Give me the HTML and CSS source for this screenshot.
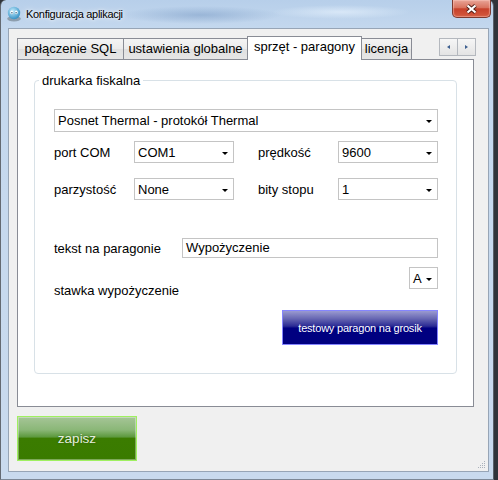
FILE: index.html
```html
<!DOCTYPE html>
<html>
<head>
    <title>Konfiguracja aplikacji</title>
    <link rel="stylesheet" href="styles.css">
</head>
<body>
    <div class="window">
        <div class="titlebar">
            <svg class="app-icon" width="16" height="16" viewBox="0 0 16 16">
                <defs>
                    <radialGradient id="face" cx="0.4" cy="0.35" r="0.7">
                        <stop offset="0" stop-color="#c4ecfc"/>
                        <stop offset="1" stop-color="#2c8cc2"/>
                    </radialGradient>
                </defs>
                <ellipse cx="8" cy="12.8" rx="6.8" ry="2.8" fill="#8d9eae"/>
                <circle cx="8" cy="7" r="6.2" fill="url(#face)"/>
                <ellipse cx="5.7" cy="6.4" rx="1.4" ry="1.8" fill="#fff"/>
                <ellipse cx="10.3" cy="6.4" rx="1.4" ry="1.8" fill="#fff"/>
                <circle cx="5.9" cy="6.8" r="0.7" fill="#1d4f70"/>
                <circle cx="10.1" cy="6.8" r="0.7" fill="#1d4f70"/>
            </svg>
            <span class="title">Konfiguracja aplikacji</span>
            <div class="close-btn">
                <svg width="13" height="10" viewBox="0 0 13 10">
                    <path d="M2.5 1.5 L10.5 8.5 M10.5 1.5 L2.5 8.5" stroke="#4f1d15" stroke-width="4"/>
                    <path d="M2.5 1.5 L10.5 8.5 M10.5 1.5 L2.5 8.5" stroke="#fff" stroke-width="2.2"/>
                </svg>
            </div>
        </div>

        <div class="client">
            <div class="tab-header">
                <div class="tab tab-sql">połączenie SQL</div>
                <div class="tab tab-global">ustawienia globalne</div>
                <div class="tab tab-hw active">sprzęt - paragony</div>
                <div class="tab tab-lic">licencja</div>
                <div class="tab-scroll">
                    <div class="scroll-btn"><i class="tri-left"></i></div>
                    <div class="scroll-btn"><i class="tri-right"></i></div>
                </div>
            </div>

            <div class="tab-page">
                <fieldset class="group">
                    <legend>drukarka fiskalna</legend>

                    <div class="combo combo-printer">
                        <span>Posnet Thermal - protokół Thermal</span>
                        <i class="arrow"></i>
                    </div>

                    <div class="port-grid">
                        <label>port COM</label>
                        <div class="combo"><span>COM1</span><i class="arrow"></i></div>
                        <label class="col-second">prędkość</label>
                        <div class="combo"><span>9600</span><i class="arrow"></i></div>

                        <label>parzystość</label>
                        <div class="combo"><span>None</span><i class="arrow"></i></div>
                        <label class="col-second">bity stopu</label>
                        <div class="combo"><span>1</span><i class="arrow"></i></div>
                    </div>

                    <div class="text-row">
                        <label>tekst na paragonie</label>
                        <div class="textbox">Wypożyczenie</div>
                    </div>

                    <div class="rate-row">
                        <label>stawka wypożyczenie</label>
                        <div class="combo combo-rate"><span>A</span><i class="arrow"></i></div>
                    </div>

                    <div class="actions">
                        <button class="print-btn">testowy paragon na grosik</button>
                    </div>
                </fieldset>
            </div>

            <button class="save-btn">zapisz</button>

            <svg class="grip" width="8" height="8" viewBox="0 0 8 8">
                <g fill="#a9b1bb">
                    <rect x="6" y="0" width="1" height="1"/>
                    <rect x="4" y="2" width="1" height="1"/>
                    <rect x="6" y="2" width="1" height="1"/>
                    <rect x="2" y="4" width="1" height="1"/>
                    <rect x="4" y="4" width="1" height="1"/>
                    <rect x="6" y="4" width="1" height="1"/>
                    <rect x="0" y="6" width="1" height="1"/>
                    <rect x="2" y="6" width="1" height="1"/>
                    <rect x="4" y="6" width="1" height="1"/>
                    <rect x="6" y="6" width="1" height="1"/>
                </g>
            </svg>
        </div>
    </div>
</body>
</html>
```

FILE: styles.css
```css
* {
    box-sizing: border-box;
}

body {
    margin: 0;
    background: #30343a;
    font-family: 'Liberation Sans', Arial, sans-serif;
    font-size: 13px;
    color: #000;
}

/* window frame (aero glass) */
.window {
    width: 494px;
    height: 480px;
    display: flex;
    flex-direction: column;
    padding: 0 4px 7px 7px;
    border-left: 1px solid #646a72;
    border-right: 1px solid #596069;
    border-bottom: 1px solid #7d8896;
    border-radius: 6px 6px 0 0;
    background:
        radial-gradient(ellipse 80px 9px at 200px 15px, rgba(110, 145, 190, 0.45), transparent),
        radial-gradient(ellipse 70px 7px at 340px 12px, rgba(235, 245, 255, 0.6), transparent),
        linear-gradient(to bottom, #b7cfea 0px, #c4d8ee 29px, #c9daee 100%);
}

.titlebar {
    height: 29px;
    display: flex;
    align-items: flex-start;
    margin-left: -2px;
    margin-right: -2px;
}

.app-icon {
    margin-top: 6px;
    flex: none;
}

.title {
    margin-top: 7px;
    margin-left: 4px;
    font-size: 11px;
    line-height: 14px;
    letter-spacing: -0.3px;
    color: #000;
    text-shadow: 0 0 6px rgba(255, 255, 255, 0.9), 0 0 3px rgba(255, 255, 255, 0.9);
}

.close-btn {
    margin-left: auto;
    width: 39px;
    height: 18px;
    display: flex;
    align-items: center;
    justify-content: center;
    border: 1px solid #7d3a30;
    border-top: none;
    border-radius: 0 0 5px 5px;
    background: linear-gradient(to bottom, #e8a497 0%, #d9735f 45%, #c7412b 52%, #d45a3f 100%);
    box-shadow: inset 0 0 1px 1px rgba(255, 210, 200, 0.45);
}

/* client area */
.client {
    flex: 1;
    position: relative;
    display: flex;
    flex-direction: column;
    background: #f0f0f0;
    border: 1px solid #97a5b6;
    padding: 7px 14px 10px 8px;
}

.grip {
    position: absolute;
    right: 2px;
    bottom: 2px;
}

/* tabs */
.tab-header {
    display: flex;
    align-items: flex-end;
    height: 23px;
    margin-right: -2px;
}

.tab {
    height: 21px;
    margin-right: -1px;
    border: 1px solid #898c95;
    border-bottom: none;
    background: linear-gradient(to bottom, #f4f4f4 0%, #ebebeb 50%, #e0e0e0 51%, #e6e6e6 100%);
    text-align: center;
    line-height: 20px;
    white-space: nowrap;
}

.tab-sql { width: 107px; }
.tab-global { width: 125px; }
.tab-hw { width: 115px; }
.tab-lic { width: 51px; }

.tab.active {
    position: relative;
    z-index: 1;
    height: 24px;
    margin-bottom: -1px;
    background: #fff;
}

.tab-scroll {
    display: flex;
    align-self: flex-start;
    margin-left: auto;
    margin-top: 2px;
}

.scroll-btn {
    width: 19px;
    height: 18px;
    margin-right: -1px;
    display: flex;
    align-items: center;
    justify-content: center;
    border: 1px solid #b4b8be;
    background: linear-gradient(to bottom, #f6f6f6, #e4e4e4);
}

.scroll-btn:last-child {
    margin-right: 0;
}

.tri-left {
    border-top: 2.5px solid transparent;
    border-bottom: 2.5px solid transparent;
    border-right: 3px solid #3d5f8f;
}

.tri-right {
    border-top: 2.5px solid transparent;
    border-bottom: 2.5px solid transparent;
    border-left: 3px solid #3d5f8f;
}

.tab-page {
    height: 348px;
    background: #fff;
    border: 1px solid #898c95;
    padding: 13px 16px 0 16px;
}

/* group box */
.group {
    margin: 0;
    min-width: 0;
    padding: 21px 18px 28px 19px;
    border: 1px solid #d8e1e7;
    border-radius: 4px;
}

.group legend {
    margin-left: -15px;
    padding: 0 3px;
    line-height: 15px;
}

label {
    line-height: 15px;
    white-space: nowrap;
}

/* combo boxes */
.combo {
    height: 22px;
    display: flex;
    align-items: center;
    justify-content: space-between;
    padding: 0 5px 0 3px;
    background: #fff;
    border: 1px solid #c4c4c4;
}

.combo .arrow {
    width: 0;
    height: 0;
    margin-top: 2px;
    border-left: 3px solid transparent;
    border-right: 3px solid transparent;
    border-top: 3px solid #000;
}

.combo-printer {
    height: 23px;
    margin-bottom: 9px;
}

.port-grid {
    display: grid;
    grid-template-columns: 80px 100px 1fr 100px;
    row-gap: 15px;
    align-items: center;
}

.port-grid .col-second {
    padding-left: 24px;
}

.text-row {
    display: flex;
    align-items: center;
    margin-top: 38px;
}

.text-row label {
    width: 128px;
}

.textbox {
    flex: 1;
    height: 20px;
    line-height: 18px;
    padding: 0 3px;
    border: 1px solid #c4c4c4;
    background: #fff;
}

.rate-row {
    display: flex;
    justify-content: space-between;
    align-items: flex-start;
    margin-top: 9px;
}

.rate-row label {
    margin-top: 16px;
}

.combo-rate {
    width: 29px;
}

.actions {
    display: flex;
    justify-content: flex-end;
    margin-top: 12px;
}

.print-btn {
    width: 156px;
    height: 35px;
    padding: 0;
    border: 1px solid #8585ff;
    background: linear-gradient(to bottom, #9a9ad0 0%, #6a6ab4 22%, #2a2a94 46%, #000080 52%, #000080 100%);
    color: #fff;
    font-family: 'Liberation Sans', Arial, sans-serif;
    font-size: 11px;
    letter-spacing: -0.2px;
}

/* save button */
.save-btn {
    width: 120px;
    height: 45px;
    margin-top: 9px;
    padding: 0;
    border: 1px solid #9ff060;
    box-shadow: inset 0 0 0 1px rgba(255, 255, 255, 0.35);
    background: linear-gradient(to bottom, #a6c597 0%, #8ab777 30%, #5e9a3f 46%, #3b7c00 50%, #3a7b00 100%);
    color: #e4eedd;
    font-family: 'Liberation Sans', Arial, sans-serif;
    font-size: 13.5px;
    text-shadow: 0 0 2px rgba(40, 70, 20, 0.6);
}
```
